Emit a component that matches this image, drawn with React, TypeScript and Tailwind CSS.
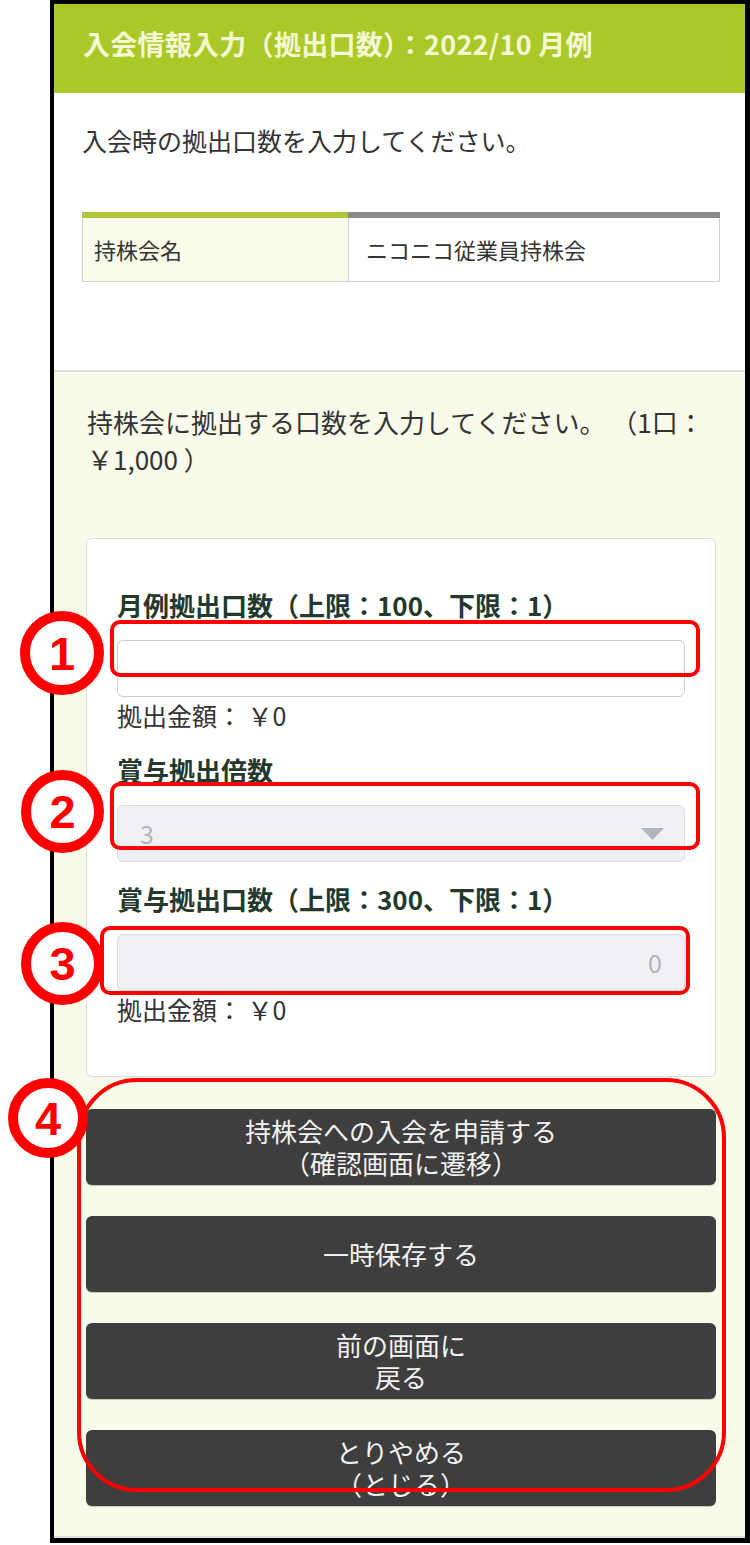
import type { ReactNode } from "react";

const font = { fontFamily: '"Noto Sans CJK JP", "Noto Sans", sans-serif' };

/** Red numbered circle used by the annotation overlay. */
function Marker({ n, className }: { n: string; className: string }) {
  return (
    <div
      className={`absolute flex items-center justify-center rounded-full border-[10px] border-[#ff0000] bg-white text-[47px] font-bold leading-none text-[#ff0000] ${className}`}
      style={{ fontFamily: '"Liberation Sans", Arial, sans-serif' }}
    >
      {n}
    </div>
  );
}

function Label({ children, className = "" }: { children: ReactNode; className?: string }) {
  return (
    <p className={`text-[26px] font-bold leading-[36px] text-[#24392c] ${className}`}>
      {children}
    </p>
  );
}

function Amount() {
  return <p className="text-[25px] leading-[36px] text-[#333]">拠出金額： ￥0</p>;
}

function DarkButton({ children }: { children: ReactNode }) {
  return (
    <button className="flex h-[76px] w-full flex-col items-center justify-center overflow-hidden rounded-md bg-[#3e3e3e] text-[26px] leading-[32px] text-[#f2f2f2] shadow-[0_1px_0_#c9c9bb]">
      {children}
    </button>
  );
}

export default function App() {
  return (
    <div className="relative min-h-[1545px] bg-white" style={font}>
      {/* Phone frame */}
      <div className="ml-[50px] w-[700px] border-b-[5px] border-l-4 border-r-[5px] border-t-4 border-black">
        {/* Header */}
        <header className="flex h-[89px] items-center bg-[#aac828] pb-[8px] pl-[29px]">
          <h1 className="text-[27px] font-bold tracking-[0.01em] text-[#f3f8d2]">
            入会情報入力（拠出口数）：2022/10 月例
          </h1>
        </header>

        {/* Intro + summary table */}
        <section className="h-[277px] pl-[28px] pr-[25px] pt-[29px]">
          <p className="text-[25px] leading-[36px] text-[#333]">
            入会時の拠出口数を入力してください。
          </p>
          <div className="mt-[54px] grid grid-cols-[266px_1fr] text-[22px] text-[#333]">
            <div className="border-t-[6px] border-[#aec83a]" />
            <div className="border-t-[6px] border-[#8a8a8a]" />
            <div className="flex h-[64px] items-center border-b border-l border-[#cfcfcf] bg-[#fafbe9] pl-[11px]">
              持株会名
            </div>
            <div className="flex h-[64px] items-center border border-t-0 border-[#cfcfcf] bg-white pl-[17px]">
              ニコニコ従業員持株会
            </div>
          </div>
        </section>

        {/* Input area */}
        <section className="border-b-2 border-t-2 border-[#e0e0d8] bg-[#f9faea] pb-[30px] pl-[32px] pr-[29px] pt-[31px]">
          <p className="pl-[1px] text-[26px] leading-[37px] text-[#333]">
            持株会に拠出する口数を入力してください。 （1口：￥1,000 ）
          </p>

          <div className="mt-[61px] rounded-md border border-[#dcdcdc] bg-white px-[30px] pb-[49px] pt-[48px]">
            <Label>月例拠出口数（上限：100、下限：1）</Label>
            <div className="mt-[17px] h-[57px] rounded-md border border-[#cccccc] bg-white" />
            <Amount />

            <Label className="mt-[19px]">賞与拠出倍数</Label>
            <div className="mt-[17px] flex h-[57px] items-center justify-between rounded-md border border-[#d9dce3] bg-[#eef0f4] pl-[22px] pr-[20px] text-[25px] text-[#b5b5b5]">
              <span>3</span>
              <svg width="23" height="12" viewBox="0 0 23 12">
                <path d="M0 0 H23 L11.5 12 Z" fill="#b0b4bf" />
              </svg>
            </div>

            <Label className="mt-[19px]">賞与拠出口数（上限：300、下限：1）</Label>
            <div className="mt-[17px] flex h-[57px] items-center justify-end rounded-md border border-[#d9dce3] bg-[#eef0f4] pr-[22px] text-[25px] text-[#b5b5b5]">
              0
            </div>
            <Amount />
          </div>

          <div className="mt-[32px] flex flex-col gap-[31px]">
            <DarkButton>
              <span>持株会への入会を申請する</span>
              <span>（確認画面に遷移）</span>
            </DarkButton>
            <DarkButton>
              <span>一時保存する</span>
            </DarkButton>
            <DarkButton>
              <span>前の画面に</span>
              <span>戻る</span>
            </DarkButton>
            <DarkButton>
              <span>とりやめる</span>
              <span>（とじる）</span>
            </DarkButton>
          </div>
        </section>
      </div>

      {/* Annotation overlay */}
      <div className="absolute left-[110px] top-[620px] h-[57px] w-[590px] rounded-[10px] border-4 border-[#ff0000]" />
      <div className="absolute left-[110px] top-[782px] h-[68px] w-[590px] rounded-[10px] border-4 border-[#ff0000]" />
      <div className="absolute left-[100px] top-[926px] h-[69px] w-[590px] rounded-[10px] border-4 border-[#ff0000]" />
      <div className="absolute left-[77px] top-[1078px] h-[414px] w-[649px] rounded-[60px] border-4 border-[#ff0000]" />

      <Marker n="1" className="left-[20px] top-[611px] h-[84px] w-[84px]" />
      <Marker n="2" className="left-[21px] top-[770px] h-[83px] w-[83px]" />
      <Marker n="3" className="left-[21px] top-[922px] h-[83px] w-[83px]" />
      <Marker n="4" className="left-[8px] top-[1078px] h-[80px] w-[80px]" />
    </div>
  );
}
